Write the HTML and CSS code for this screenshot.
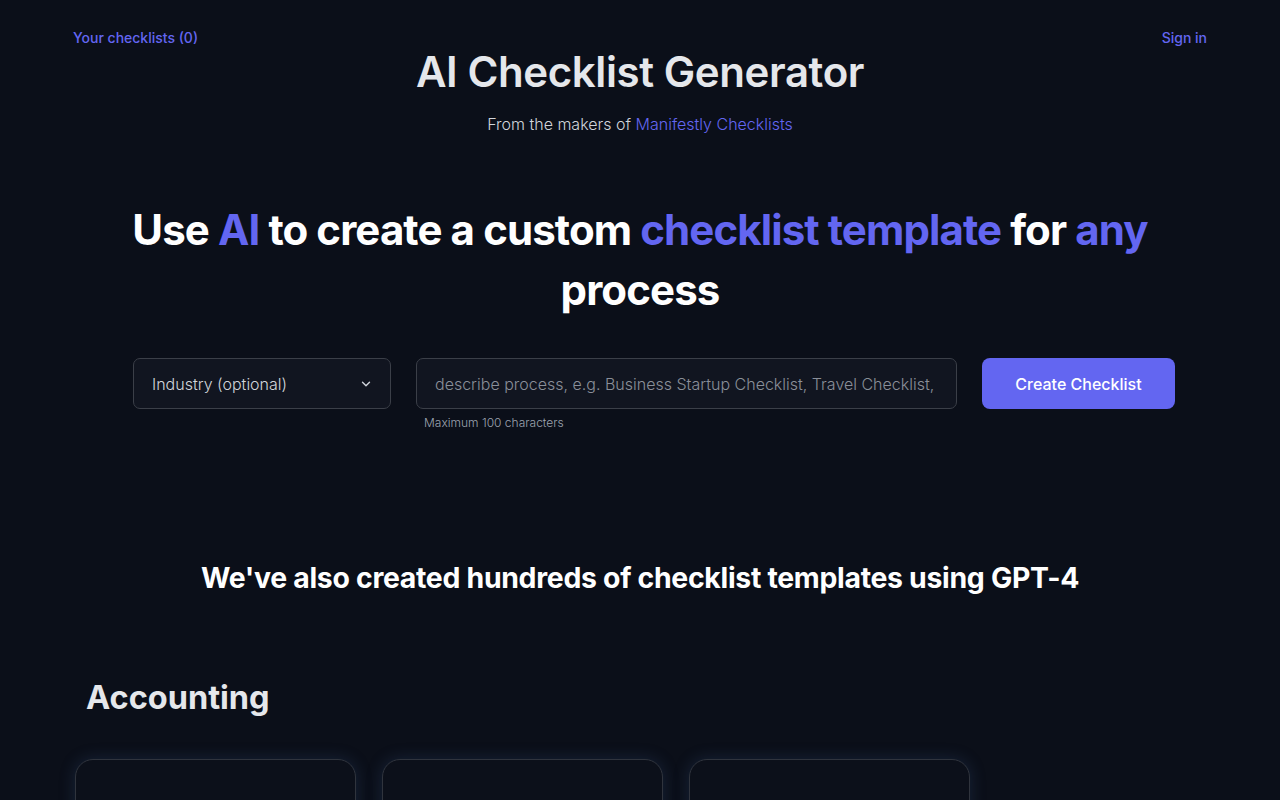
FILE: index.html
```html
<!DOCTYPE html>
<html lang="en">
<head>
    <meta charset="UTF-8">
    <meta name="viewport" content="width=device-width, initial-scale=1.0">
    <title>AI Checklist Generator</title>
    <link rel="stylesheet" href="styles.css">
</head>
<body>
    <header class="topbar">
        <a href="#" class="nav-link">Your checklists (0)</a>
        <a href="#" class="nav-link">Sign in</a>
    </header>

    <div class="brand">
        <h1>AI Checklist Generator</h1>
        <p class="makers">From the makers of <a href="#">Manifestly Checklists</a></p>
    </div>

    <main>
        <section class="hero">
            <h2>Use <span class="accent">AI</span> to create a custom <span class="accent">checklist template</span> for <span class="accent">any</span> process</h2>

            <form class="generator" onsubmit="return false">
                <div class="select-wrap">
                    <select id="industry">
                        <option>Industry (optional)</option>
                        <option>Accounting</option>
                        <option>Construction</option>
                        <option>Healthcare</option>
                    </select>
                    <svg class="chevron" width="14" height="14" viewBox="0 0 20 20" fill="none" stroke="currentColor" stroke-width="2" stroke-linecap="round" stroke-linejoin="round"><path d="M5 7.5l5 5 5-5"/></svg>
                </div>
                <div class="field">
                    <input type="text" maxlength="100" placeholder="describe process, e.g. Business Startup Checklist, Travel Checklist, etc.">
                    <small>Maximum 100 characters</small>
                </div>
                <button type="submit">Create Checklist</button>
            </form>
        </section>

        <section class="templates">
            <h3>We've also created hundreds of checklist templates using GPT-4</h3>

            <div class="category">
                <h4>Accounting</h4>
                <div class="cards">
                    <div class="card"></div>
                    <div class="card"></div>
                    <div class="card"></div>
                </div>
            </div>
        </section>
    </main>
</body>
</html>
```

FILE: styles.css
```css
body {
    margin: 0;
    background: #0b0f19;
    color: #fff;
    font-family: Inter, 'Noto Sans', sans-serif;
}

a {
    text-decoration: none;
    color: #6366f1;
}

.topbar {
    display: flex;
    justify-content: space-between;
    padding: 28px 73px 0;
    height: 20px;
}

.nav-link {
    font-size: 14px;
    font-weight: 500;
    line-height: 20px;
}

.brand {
    text-align: center;
}

.brand h1 {
    margin: 0;
    font-size: 42px;
    line-height: 48px;
    font-weight: 600;
    color: #e5e7eb;
    letter-spacing: -0.4px;
}

.makers {
    margin: 16px 0 0;
    font-size: 16px;
    line-height: 24px;
    color: #d1d5db;
    font-weight: 300;
}

.hero {
    max-width: 1070px;
    margin: 0 auto;
    padding-top: 64px;
}

.hero h2 {
    margin: 0;
    text-align: center;
    font-size: 42px;
    line-height: 60px;
    font-weight: 700;
    letter-spacing: -0.9px;
}

.accent {
    color: #6366f1;
}

.generator {
    display: flex;
    gap: 25px;
    margin-top: 38px;
    padding-left: 28px;
    align-items: flex-start;
}

.select-wrap {
    position: relative;
    width: 258px;
    color: #d1d5db;
}

.select-wrap select {
    width: 100%;
    height: 51px;
    padding: 0 40px 0 18px;
    appearance: none;
    background: #111520;
    border: 1px solid #3b3f48;
    border-radius: 7px;
    color: #d1d5db;
    font-family: inherit;
    font-size: 16px;
    font-weight: 300;
}

.chevron {
    position: absolute;
    right: 18px;
    top: 19px;
    pointer-events: none;
}

.field {
    flex: 1;
}

.field input {
    box-sizing: border-box;
    width: 100%;
    height: 51px;
    padding: 0 18px;
    background: #111520;
    border: 1px solid #3b3f48;
    border-radius: 7px;
    color: #e5e7eb;
    font-family: inherit;
    font-size: 16px;
    font-weight: 300;
}

.field input::placeholder {
    color: #8a8f99;
}

.field small {
    display: block;
    margin: 6px 0 0 8px;
    font-size: 12px;
    color: #9ca3af;
    font-weight: 300;
}

button {
    width: 193px;
    height: 51px;
    border: none;
    border-radius: 8px;
    background: #6366f1;
    color: #fff;
    font-family: inherit;
    font-size: 16px;
    font-weight: 500;
    cursor: pointer;
}

button:hover {
    background: #4f46e5;
}

.templates {
    max-width: 1130px;
    margin: 0 auto;
    padding-top: 130px;
}

.templates h3 {
    margin: 0;
    text-align: center;
    font-size: 28.4px;
    line-height: 36px;
    font-weight: 700;
    letter-spacing: -0.3px;
}

.category {
    padding-top: 82px;
}

.category h4 {
    margin: 0 0 0 11px;
    font-size: 32.5px;
    line-height: 40px;
    font-weight: 700;
    color: #e5e7eb;
}

.cards {
    display: flex;
    gap: 26px;
    margin-top: 41px;
}

.card {
    width: 281px;
    height: 200px;
    box-sizing: border-box;
    border: 1px solid #30343d;
    border-radius: 18px;
    background: #0c101a;
    box-shadow: 0 0 16px rgba(56, 90, 140, 0.28);
}
```
